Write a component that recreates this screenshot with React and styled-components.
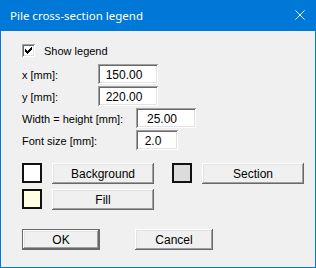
import React from "react";
import styled, { createGlobalStyle } from "styled-components";

const GlobalStyle = createGlobalStyle`
  html, body {
    margin: 0;
    padding: 0;
    background: #f0f0f0;
  }
  * {
    box-sizing: border-box;
  }
`;

const Window = styled.div`
  width: 316px;
  height: 268px;
  border: 1px solid #0078d7;
  border-top: none;
  background: #f0f0f0;
  display: flex;
  flex-direction: column;
  font-family: "Liberation Sans", Arial, sans-serif;
  font-size: 11px;
  color: #000;
`;

const TitleBar = styled.div`
  height: 31px;
  margin: 0 -1px;
  background: #0078d7;
  display: flex;
  align-items: center;
  justify-content: space-between;
  padding: 0 10px 1px 10px;
  color: #fff;
  font-family: "Noto Sans", "Open Sans", sans-serif;
  font-size: 11.5px;
`;

const CloseButton = styled.div`
  width: 10px;
  height: 10px;
  margin-right: 1px;
  display: flex;
`;

const Body = styled.div`
  display: flex;
  flex-direction: column;
  padding: 13px 0 0 21px;
`;

const CheckRow = styled.label`
  display: flex;
  align-items: center;
  height: 13px;
  gap: 9px;
  margin-bottom: 7px;
`;

const CheckBox = styled.span`
  width: 13px;
  height: 13px;
  background: #fff;
  box-shadow: inset 1px 1px #a0a0a0, inset -1px -1px #fff,
    inset 2px 2px #696969, inset -2px -2px #e3e3e3;
  display: flex;
  align-items: center;
  justify-content: center;
`;

const FieldList = styled.div`
  display: flex;
  flex-direction: column;
  gap: 2px;
`;

const FieldRow = styled.div`
  display: flex;
  align-items: center;
  height: 20px;
`;

const FieldLabel = styled.span`
  width: ${(p) => p.$width}px;
  padding-top: 1px;
`;

const Input = styled.div`
  width: ${(p) => p.$width}px;
  height: 20px;
  background: #fff;
  box-shadow: inset 1px 1px #a0a0a0, inset -1px -1px #fff,
    inset 2px 2px #696969, inset -2px -2px #e3e3e3;
  display: flex;
  align-items: center;
  justify-content: center;
  padding: 1px 8px 0 0;
  font-size: 12px;
`;

const ColorRows = styled.div`
  display: flex;
  flex-direction: column;
  gap: 5px;
  margin-top: 13px;
`;

const ColorRow = styled.div`
  display: flex;
  gap: 18px;
`;

const ColorPair = styled.div`
  display: flex;
  gap: 10px;
`;

const Swatch = styled.div`
  width: 20px;
  height: 20px;
  border: 2px solid #111;
  background: ${(p) => p.$color};
`;

const Button = styled.button`
  height: 21px;
  width: ${(p) => p.$width || 102}px;
  padding: 0;
  margin: 0;
  border: ${(p) => (p.$default ? "1px solid #696969" : "none")};
  background: #f0f0f0;
  font-family: "Liberation Sans", Arial, sans-serif;
  font-size: 12px;
  color: #000;
  box-shadow: inset -1px -1px #696969, inset 1px 1px #fff,
    inset -2px -2px #a0a0a0, inset 2px 2px #e3e3e3;
  display: flex;
  align-items: center;
  justify-content: center;
`;

const ButtonRow = styled.div`
  display: flex;
  gap: 35px;
  margin-top: 19px;
`;

const fields = [
  { label: "x [mm]:", labelWidth: 76, value: "150.00", width: 60 },
  { label: "y [mm]:", labelWidth: 76, value: "220.00", width: 60 },
  { label: "Width = height [mm]:", labelWidth: 114, value: "25.00", width: 60 },
  { label: "Font size [mm]:", labelWidth: 114, value: "2.0", width: 42 },
];

const CheckMark = () => (
  <svg width="7" height="7" viewBox="0 0 7 7" shapeRendering="crispEdges">
    <path
      d="M6 0h1v3h-1v1h-1v1h-1v1h-1v1h-1v-1h-1v-1h-1v-3h1v1h1v1h1v-1h1v-1h1z"
      fill="#000"
    />
  </svg>
);

const CloseIcon = () => (
  <svg width="10" height="10" viewBox="0 0 10 10">
    <path d="M0.5 0.5L9.5 9.5M9.5 0.5L0.5 9.5" stroke="#fff" strokeWidth="1" />
  </svg>
);

const App = () => (
  <>
    <GlobalStyle />
    <Window>
      <TitleBar>
        <span>Pile cross-section legend</span>
        <CloseButton>
          <CloseIcon />
        </CloseButton>
      </TitleBar>
      <Body>
        <CheckRow>
          <CheckBox>
            <CheckMark />
          </CheckBox>
          <span>Show legend</span>
        </CheckRow>
        <FieldList>
          {fields.map((f) => (
            <FieldRow key={f.label}>
              <FieldLabel $width={f.labelWidth}>{f.label}</FieldLabel>
              <Input $width={f.width}>{f.value}</Input>
            </FieldRow>
          ))}
        </FieldList>
        <ColorRows>
          <ColorRow>
            <ColorPair>
              <Swatch $color="#ffffff" />
              <Button>Background</Button>
            </ColorPair>
            <ColorPair>
              <Swatch $color="#dcdcdc" />
              <Button>Section</Button>
            </ColorPair>
          </ColorRow>
          <ColorRow>
            <ColorPair>
              <Swatch $color="#ffffe4" />
              <Button>Fill</Button>
            </ColorPair>
          </ColorRow>
        </ColorRows>
        <ButtonRow>
          <Button $default $width={78}>OK</Button>
          <Button $width={78}>Cancel</Button>
        </ButtonRow>
      </Body>
    </Window>
  </>
);

export default App;
